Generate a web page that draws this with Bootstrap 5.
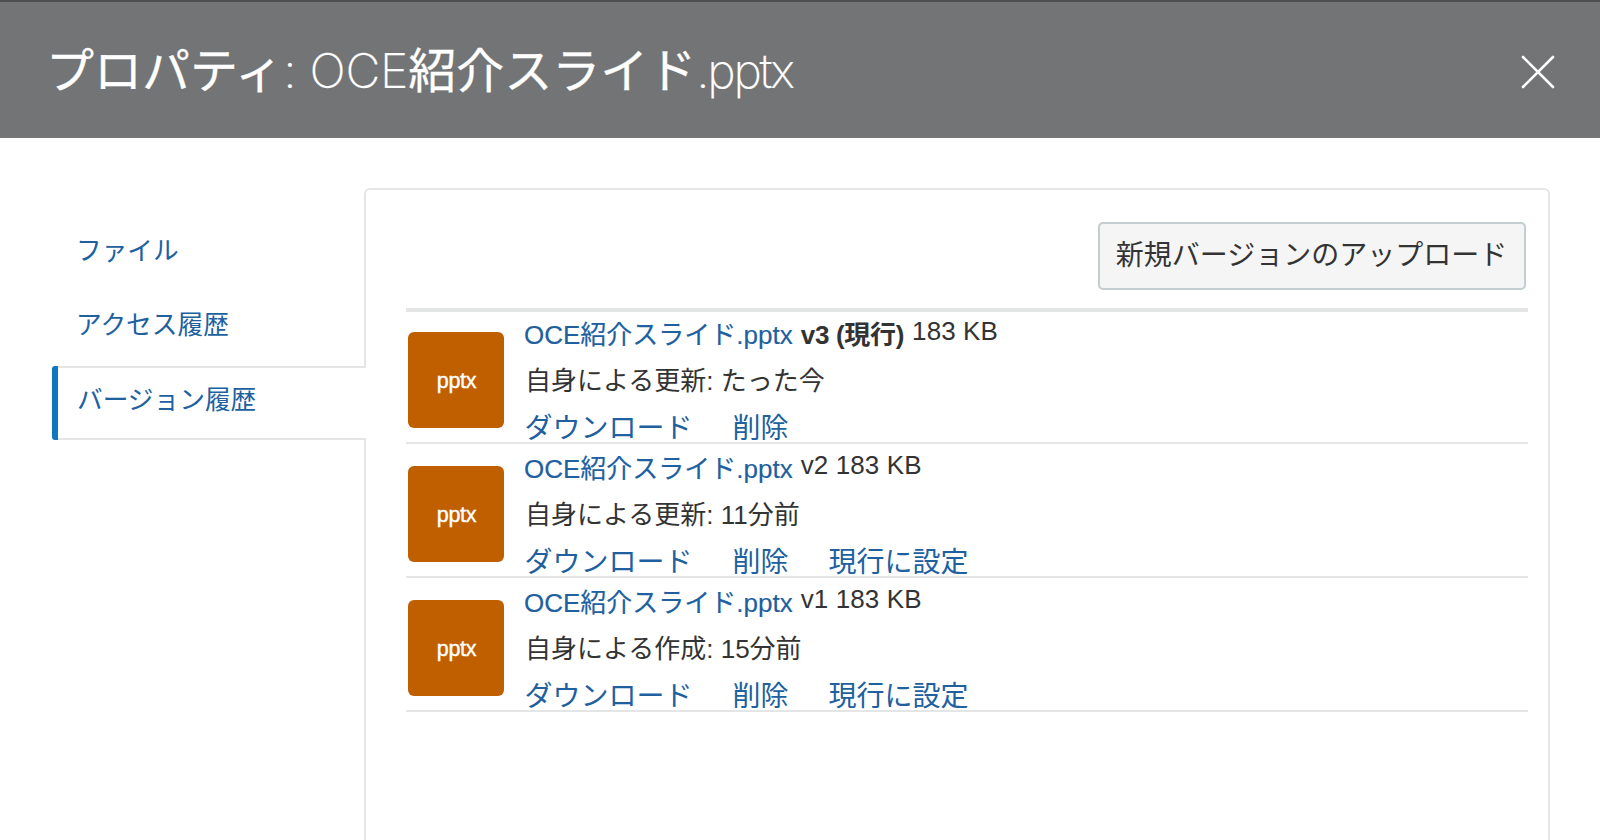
<!DOCTYPE html>
<html lang="ja">
<head>
<meta charset="utf-8">
<meta name="viewport" content="width=device-width, initial-scale=1">
<title>プロパティ</title>
<link href="https://cdn.jsdelivr.net/npm/bootstrap@5.3.0/dist/css/bootstrap.min.css" rel="stylesheet">
<style>
  body { font-family: "Liberation Sans", "Noto Sans CJK JP", sans-serif; color: #333; background: #fff; height: 840px; }
  a, .side a, .side a.active { color: #20609f; text-decoration: none; }
  .dialog-head { height: 138px; background: #737476; border-top: 2px solid #4e4f50; padding: 4px 45px 0 46px; }
  .dialog-title { font-family: Inter, "Noto Sans CJK JP", sans-serif; font-size: 48px; line-height: 60px; font-weight: 400; margin-bottom: 3px; -webkit-text-stroke: .3px #fff; }
  .thin { font-weight: 200; -webkit-text-stroke: .2px #fff; letter-spacing: -.2px; }
  .thin.ext { letter-spacing: -2.2px; }
  .dialog-body { padding: 50px 50px 0 52px; height: 702px; }
  .side { width: 314px; margin-right: -2px; z-index: 1; padding-top: 26px; }
  .side a { font-size: 25.7px; line-height: 36px; padding: 19px 0 17px 24px; height: 74px; border-radius: 0; }
  .side a.active { border: solid #e4e6e6; border-width: 2px 0; background: #fff; padding: 14px 0 0 19px; }
  .side .tab-active { border-left: 6px solid #0f76bf; border-radius: 3px 0 0 3px; margin-top: 4px; }
  .panel { border: 2px solid #e4e6e6; border-bottom: 0; border-radius: 6px 6px 0 0; padding: 32px 20px 0 40px; }
  .btn-upload { width: 428px; height: 68px; margin-right: 2px; padding: 0 1px 0 0; font-size: 28px; line-height: 1; color: #333; background: #f5f5f5; border: 2px solid #c4cdd0; border-radius: 5px; }
  .versions { border-top: 4px solid #e4e6e6; margin-top: 18px; }
  .version { height: 134px; border-bottom: 2px solid #e4e6e6; }
  .version:first-child { height: 132px; }
  .version:first-child .tile { margin-top: 20px; }
  .version:first-child .info { padding-top: 0; }
  .tile { width: 96px; height: 96px; margin: 22px 20px 0 2px; background: #bf5f00; border-radius: 6px; color: #fff; font-size: 21.5px; padding-left: 1px; padding-top: 2px; letter-spacing: -.3px; -webkit-text-stroke: .4px #fff; }
  .info { padding-top: 2px; font-size: 26px; }
  .line-name { height: 46px; line-height: 46px; }
  .line-name .fname { margin-right: 8px; -webkit-text-stroke: .15px; }
  .line-name strong { letter-spacing: -.3px; }
  .line-name .meta { position: relative; top: -4px; letter-spacing: .1px; }
  .line-by { height: 46px; line-height: 46px; padding-left: 1px; }
  .line-act { height: 46px; line-height: 49px; font-size: 28px; gap: 40px; padding-left: .5px; }
</style>
</head>
<body class="overflow-hidden">
<header class="dialog-head d-flex align-items-center justify-content-between">
  <h1 class="dialog-title text-white text-nowrap">プロパティ<span class="thin">: OCE</span>紹介スライド<span class="thin ext">.pptx</span></h1>
  <svg width="34" height="34" viewBox="0 0 34 34" fill="none" stroke="#fff" stroke-width="2.6" stroke-linecap="round" role="img" aria-label="閉じる"><path d="M2 2 32 32M32 2 2 32"/></svg>
</header>
<main class="dialog-body d-flex">
  <nav class="side nav flex-column flex-nowrap flex-shrink-0">
    <a class="nav-link" href="#">ファイル</a>
    <a class="nav-link" href="#">アクセス履歴</a>
    <div class="tab-active"><a class="nav-link active" href="#">バージョン履歴</a></div>
  </nav>
  <section class="panel flex-grow-1">
    <div class="d-flex justify-content-end"><button type="button" class="btn btn-upload">新規バージョンのアップロード</button></div>
    <div class="versions">
      <div class="version d-flex">
        <div class="tile d-flex align-items-center justify-content-center flex-shrink-0">pptx</div>
        <div class="info text-nowrap">
          <div class="line-name d-flex"><a class="fname" href="#">OCE紹介スライド.pptx</a><strong class="me-2">v3 (現行)</strong><span class="meta">183 KB</span></div>
          <div class="line-by">自身による更新: たった今</div>
          <div class="line-act d-flex"><a href="#">ダウンロード</a><a href="#">削除</a></div>
        </div>
      </div>
      <div class="version d-flex">
        <div class="tile d-flex align-items-center justify-content-center flex-shrink-0">pptx</div>
        <div class="info text-nowrap">
          <div class="line-name d-flex"><a class="fname" href="#">OCE紹介スライド.pptx</a><span class="meta">v2 183 KB</span></div>
          <div class="line-by">自身による更新: 11分前</div>
          <div class="line-act d-flex"><a href="#">ダウンロード</a><a href="#">削除</a><a href="#">現行に設定</a></div>
        </div>
      </div>
      <div class="version d-flex">
        <div class="tile d-flex align-items-center justify-content-center flex-shrink-0">pptx</div>
        <div class="info text-nowrap">
          <div class="line-name d-flex"><a class="fname" href="#">OCE紹介スライド.pptx</a><span class="meta">v1 183 KB</span></div>
          <div class="line-by">自身による作成: 15分前</div>
          <div class="line-act d-flex"><a href="#">ダウンロード</a><a href="#">削除</a><a href="#">現行に設定</a></div>
        </div>
      </div>
    </div>
  </section>
</main>
<script src="https://cdn.jsdelivr.net/npm/bootstrap@5.3.0/dist/js/bootstrap.bundle.min.js"></script>
</body>
</html>
